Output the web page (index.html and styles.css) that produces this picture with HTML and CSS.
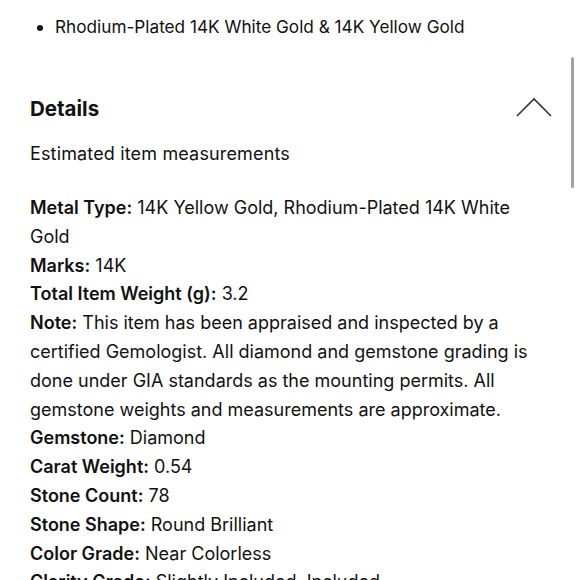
FILE: index.html
```html
<!DOCTYPE html>
<html>
<head>
  <title>Details</title>
  <link rel="stylesheet" href="styles.css">
</head>
<body>
  <ul class="metal-list">
    <li>Rhodium-Plated 14K White Gold &amp; 14K Yellow Gold</li>
  </ul>

  <!-- Блок с деталями -->
  <div class="details">
    <div class="details-head">
      <h2>Details</h2>
      <svg class="chevron" width="36" height="20" viewBox="0 0 36 20">
        <polyline points="1,19 18,2 35,19" fill="none" stroke="#333" stroke-width="1.6"/>
      </svg>
    </div>
    <p class="details-note">Estimated item measurements</p>
    <div class="specs">
      <div><b>Metal Type:</b> 14K Yellow Gold, Rhodium-Plated 14K White Gold</div>
      <div><b>Marks:</b> 14K</div>
      <div><b>Total Item Weight (g):</b> 3.2</div>
      <div><b>Note:</b> This item has been appraised and inspected by a certified Gemologist. All diamond and gemstone grading is done under GIA standards as the mounting permits. All gemstone weights and measurements are approximate.</div>
      <div><b>Gemstone:</b> Diamond</div>
      <div><b>Carat Weight:</b> 0.54</div>
      <div><b>Stone Count:</b> 78</div>
      <div><b>Stone Shape:</b> Round Brilliant</div>
      <div><b>Color Grade:</b> Near Colorless</div>
      <div><b>Clarity Grade:</b> Slightly Included, Included</div>
    </div>
  </div>

  <!-- Полоса прокрутки -->
  <div class="scroll-thumb"></div>
</body>
</html>
```

FILE: styles.css
```css
/* Общие стили */
body {
  background-color: #fff;
  font-family: Inter, "Liberation Sans", sans-serif;
  font-size: 18px;
  color: #111;
  margin: 0;
  padding: 0 30px 0 30px;
  overflow: hidden;
}

.metal-list {
  margin: 0;
  padding: 13px 0 0 25px;
  font-size: 17.2px;
  line-height: 28px;
}

/* Детали */
.details {
  margin-top: 54px;
}

.details-head {
  display: flex;
  justify-content: space-between;
  align-items: center;
}

.details-head h2 {
  margin: 0;
  font-size: 20.5px;
  font-weight: 700;
  line-height: 28px;
}

.chevron {
  display: block;
  margin-top: -4px;
  margin-right: -2px;
}

.details-note {
  margin: 17px 0 26px;
  line-height: 28px;
  letter-spacing: 0.15px;
}

.specs {
  line-height: 28.8px;
  margin-right: 5px;
}

.specs b {
  font-weight: 600;
}

/* Полоса прокрутки */
.scroll-thumb {
  position: fixed;
  top: 57px;
  right: 6px;
  width: 3px;
  height: 131px;
  border-radius: 2px;
  background-color: #a3a3a3;
}
```
